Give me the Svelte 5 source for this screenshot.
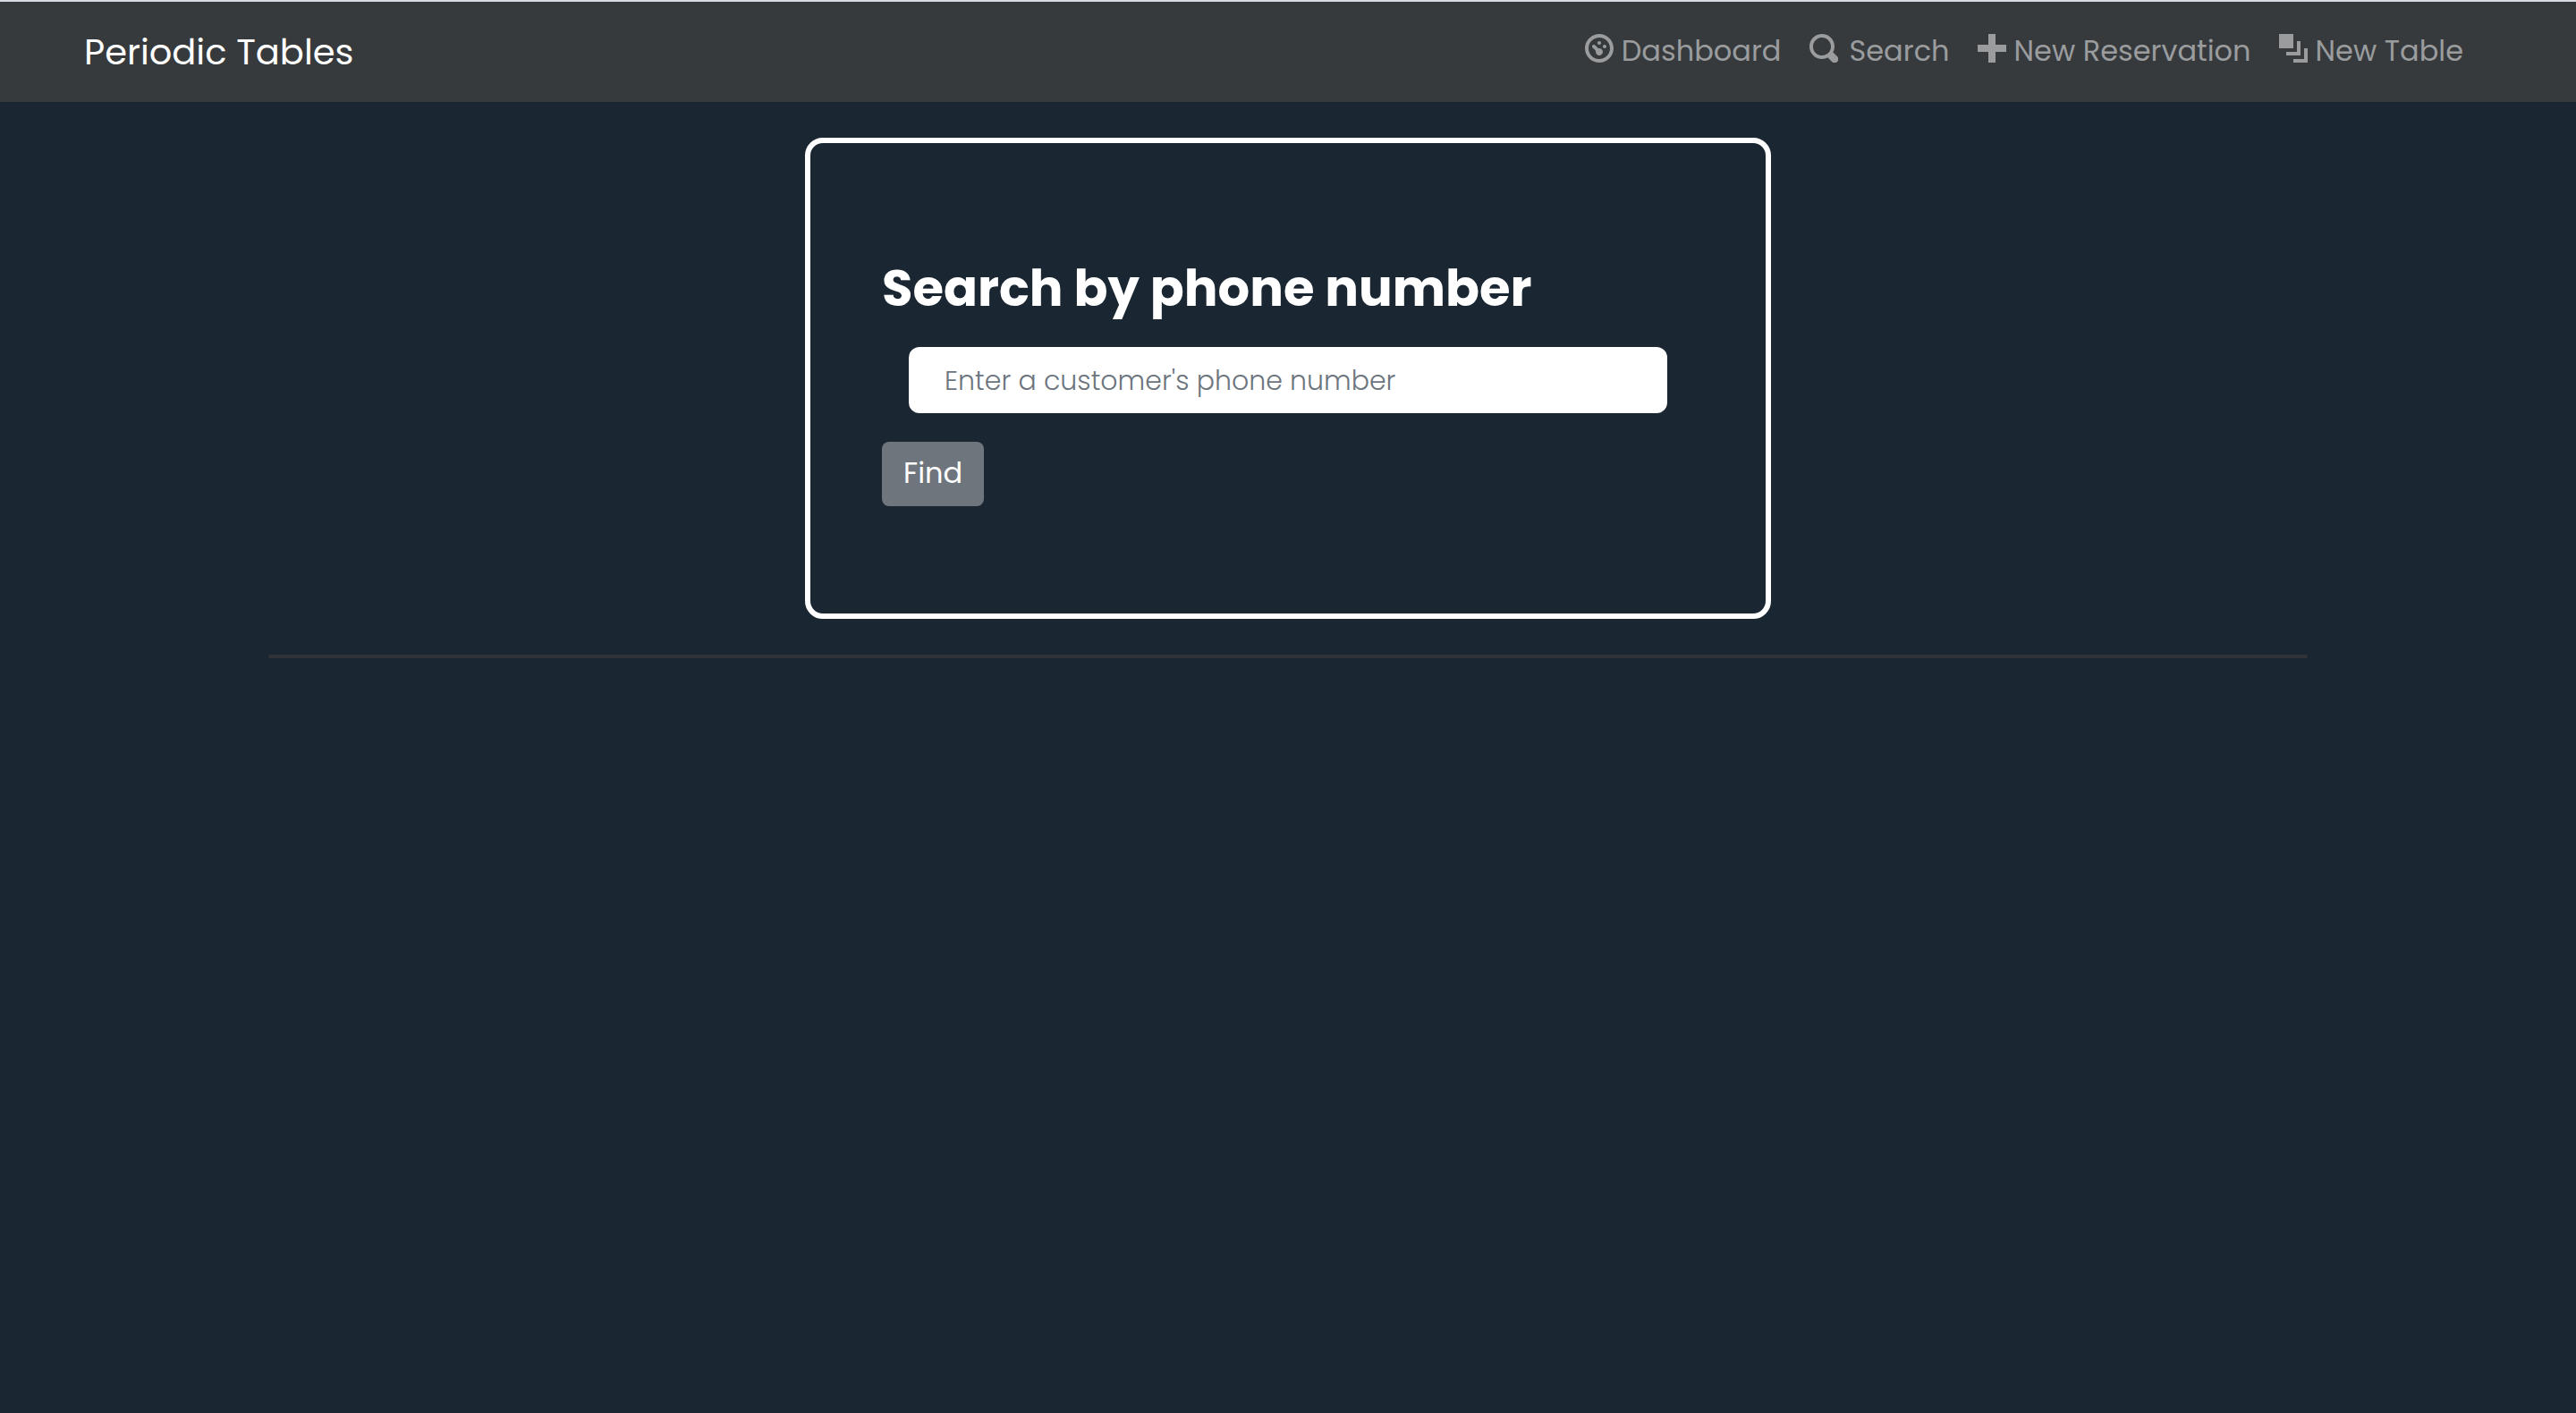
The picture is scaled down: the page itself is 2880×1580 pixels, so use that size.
<script>
  const links = [
    {
      label: 'Dashboard',
      path: 'M4 0c-2.2 0-4 1.8-4 4s1.8 4 4 4 4-1.8 4-4-1.8-4-4-4zm0 1c1.66 0 3 1.34 3 3s-1.34 3-3 3-3-1.34-3-3 1.34-3 3-3zm0 1c-.28 0-.5.22-.5.5s.22.5.5.5.5-.22.5-.5-.22-.5-.5-.5zm-1.66 1a.5.5 0 0 0-.19.84l.91.91c-.02.08-.06.16-.06.25 0 .55.45 1 1 1s1-.45 1-1-.45-1-1-1c-.09 0-.17.04-.25.06l-.91-.91a.5.5 0 0 0-.44-.16.5.5 0 0 0-.06 0zm3.16 0c-.28 0-.5.22-.5.5s.22.5.5.5.5-.22.5-.5-.22-.5-.5-.5z',
    },
    {
      label: 'Search',
      wide: true,
      path: 'M3.5 0c-1.93 0-3.5 1.57-3.5 3.5s1.57 3.5 3.5 3.5c.59 0 1.17-.14 1.66-.41a1 1 0 0 0 .13.13l1 1a1.02 1.02 0 1 0 1.44-1.44l-1-1a1 1 0 0 0-.16-.13c.27-.49.44-1.06.44-1.66 0-1.93-1.55-3.5-3.5-3.5zm0 1c1.39 0 2.5 1.11 2.5 2.5 0 .66-.24 1.27-.66 1.72-.01.01-.02.02-.03.03a1 1 0 0 0-.13.13c-.44.4-1.04.63-1.69.63-1.39 0-2.5-1.11-2.5-2.5s1.11-2.5 2.5-2.5z',
    },
    { label: 'New Reservation', path: 'M3 0v3h-3v2h3v3h2v-3h3v-2h-3v-3h-2z' },
    {
      label: 'New Table',
      path: 'M0 0v4h4v-4h-4zm5 2v3h-3v1h4v-4h-1zm2 2v3h-3v1h4v-4h-1z',
    },
  ];

  let phone = $state('');
</script>

<nav class="navbar">
  <a class="brand" href="#home">Periodic Tables</a>
  <ul class="links">
    {#each links as link}
      <li>
        <a class:wide={link.wide} href="#{link.label.toLowerCase().replace(' ', '-')}">
          <svg viewBox="0 0 8 8" aria-hidden="true"><path d={link.path} /></svg>
          <span>{link.label}</span>
        </a>
      </li>
    {/each}
  </ul>
</nav>

<main>
  <form class="card" onsubmit={(e) => e.preventDefault()}>
    <h1><label for="phone">Search by phone number</label></h1>
    <div class="field">
      <input id="phone" type="tel" placeholder="Enter a customer's phone number" bind:value={phone} />
    </div>
    <button type="submit">Find</button>
  </form>
  <hr />
</main>

<style>
  :global(body) {
    background: #1a2732;
    font-family: Poppins, Inter, sans-serif;
    font-size: 32px;
    color: #fff;
  }

  .navbar {
    display: flex;
    align-items: center;
    justify-content: space-between;
    height: 112px;
    padding: 0 126px 0 94px;
    border-top: 2px solid #d8dae3;
    background: #363a3d;
  }

  a {
    color: inherit;
    text-decoration: none;
  }

  .brand {
    font-size: 40px;
    line-height: 60px;
  }

  .links {
    display: flex;
    gap: 31px;
    margin: 0;
    padding: 0 0 2px;
    list-style: none;
    color: #9a9c9e;
  }

  .links a {
    display: flex;
    align-items: center;
    gap: 9px;
    line-height: 48px;
  }

  .links .wide {
    gap: 13px;
  }

  .links svg {
    width: 32px;
    height: 32px;
    margin-bottom: 6px;
    fill: currentColor;
  }

  main {
    max-width: 2280px;
    margin: 0 auto;
    padding-top: 40px;
  }

  .card {
    box-sizing: border-box;
    max-width: 1080px;
    margin: 0 auto;
    padding: 120px 80px;
    border: 6px solid #fff;
    border-radius: 20px;
  }

  h1 {
    margin: 0 0 22px;
    font-size: 56px;
    font-weight: 700;
    line-height: 86px;
  }

  .field {
    padding: 0 30px;
  }

  input {
    box-sizing: border-box;
    display: block;
    width: 100%;
    height: 74px;
    padding: 2px 40px 0;
    border: 0;
    border-radius: 12px;
    background: #fff;
    color: #495057;
    font-family: inherit;
    font-size: 30px;
    font-weight: 300;
  }

  input::placeholder {
    color: #6c757d;
    opacity: 1;
  }

  button {
    display: block;
    height: 72px;
    margin-top: 32px;
    padding: 0 24px 2px;
    border: 0;
    border-radius: 8px;
    background: #6e757d;
    color: #fff;
    font-family: inherit;
    font-size: 32px;
  }

  hr {
    height: 4px;
    margin: 40px 0 0;
    border: 0;
    border-radius: 2px;
    background: #2f3438;
  }
</style>
